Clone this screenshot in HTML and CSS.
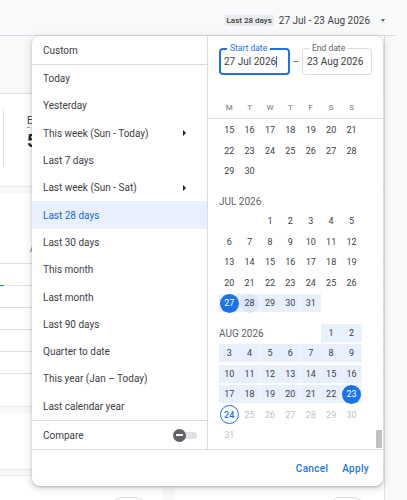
FILE: index.html
```html
<!DOCTYPE html>
<html lang="en">
<head>
  <meta charset="UTF-8">
  <meta name="viewport" content="width=device-width, initial-scale=1.0">
  <title>Reports snapshot</title>
  <link rel="stylesheet" href="styles.css">
</head>
<body>
<div class="page">
  <!-- top bar with the date range button -->
  <header class="topbar">
    <div class="range-btn">
      <span class="range-tag">Last 28 days</span>
      <span class="range-text">27 Jul - 23 Aug 2026</span>
      <span class="caret"></span>
    </div>
  </header>

  <!-- report cards behind the picker -->
  <main class="report">
    <div class="strip"></div>
    <section class="card kpis">
      <div class="kpi">
        <div class="kpi-label">Event count</div>
        <div class="kpi-value">5,204</div>
      </div>
    </section>
    <section class="card table-card">
      <div class="table-head">Active users</div>
      <div class="row"><span class="tab"></span></div>
      <div class="row"></div>
      <div class="row"></div>
      <div class="row"></div>
      <div class="row"></div>
    </section>
    <section class="card filler"></section>
    <div class="bottom-cards">
      <section class="card half left"><span class="chip"></span></section>
      <section class="card half right"><span class="chip"></span></section>
    </div>
  </main>

  <!-- date range picker -->
  <div class="picker">
    <div class="picker-body">
      <div class="presets">
        <div class="preset custom">Custom</div>
        <div class="preset">Today</div>
        <div class="preset">Yesterday</div>
        <div class="preset">This week (Sun - Today)<span class="sub"></span></div>
        <div class="preset">Last 7 days</div>
        <div class="preset">Last week (Sun - Sat)<span class="sub"></span></div>
        <div class="preset active">Last 28 days</div>
        <div class="preset">Last 30 days</div>
        <div class="preset">This month</div>
        <div class="preset">Last month</div>
        <div class="preset">Last 90 days</div>
        <div class="preset">Quarter to date</div>
        <div class="preset">This year (Jan – Today)</div>
        <div class="preset">Last calendar year</div>
        <div class="preset compare">Compare
          <span class="switch"><span class="track"></span><span class="thumb"></span></span>
        </div>
      </div>

      <div class="calendar">
        <div class="fields">
          <div class="field focus">
            <span class="field-label">Start date</span>
            27 Jul 2026<span class="cursor"></span>
          </div>
          <span class="dash">–</span>
          <div class="field">
            <span class="field-label">End date</span>
            23 Aug 2026
          </div>
        </div>
        <div class="weekdays">
          <span>M</span><span>T</span><span>W</span><span>T</span><span>F</span><span>S</span><span>S</span>
        </div>
        <div class="months">
          <div class="month">
            <div class="d">15</div><div class="d">16</div><div class="d">17</div><div class="d">18</div><div class="d">19</div><div class="d">20</div><div class="d">21</div>
            <div class="d">22</div><div class="d">23</div><div class="d">24</div><div class="d">25</div><div class="d">26</div><div class="d">27</div><div class="d">28</div>
            <div class="d">29</div><div class="d">30</div>
          </div>
          <div class="month">
            <div class="month-label full">JUL 2026</div>
            <div class="d wed">1</div><div class="d">2</div><div class="d">3</div><div class="d">4</div><div class="d">5</div>
            <div class="d">6</div><div class="d">7</div><div class="d">8</div><div class="d">9</div><div class="d">10</div><div class="d">11</div><div class="d">12</div>
            <div class="d">13</div><div class="d">14</div><div class="d">15</div><div class="d">16</div><div class="d">17</div><div class="d">18</div><div class="d">19</div>
            <div class="d">20</div><div class="d">21</div><div class="d">22</div><div class="d">23</div><div class="d">24</div><div class="d">25</div><div class="d">26</div>
            <div class="d in"><b class="sel">27</b></div><div class="d in"><b class="hover">28</b></div><div class="d in">29</div><div class="d in">30</div><div class="d in">31</div>
          </div>
          <div class="month">
            <div class="month-label">AUG 2026</div>
            <div class="d in">1</div><div class="d in">2</div>
            <div class="d in">3</div><div class="d in">4</div><div class="d in">5</div><div class="d in">6</div><div class="d in">7</div><div class="d in">8</div><div class="d in">9</div>
            <div class="d in">10</div><div class="d in">11</div><div class="d in">12</div><div class="d in">13</div><div class="d in">14</div><div class="d in">15</div><div class="d in">16</div>
            <div class="d in">17</div><div class="d in">18</div><div class="d in">19</div><div class="d in">20</div><div class="d in">21</div><div class="d in">22</div><div class="d in"><b class="sel">23</b></div>
            <div class="d"><b class="today">24</b></div><div class="d off">25</div><div class="d off">26</div><div class="d off">27</div><div class="d off">28</div><div class="d off">29</div><div class="d off">30</div>
            <div class="d off">31</div>
          </div>
          <span class="thumb-bar"></span>
        </div>
      </div>
    </div>
    <div class="picker-foot">
      <span class="btn">Cancel</span>
      <span class="btn">Apply</span>
    </div>
  </div>
</div>
</body>
</html>
```

FILE: styles.css
```css
/* page */
body{
  margin: 0;
  background-color: #f8f9fa;
  font-family: Roboto, "Noto Sans", sans-serif;
  color: #3c4043;
}
.page{
  position: relative;
  width: 407px;
  height: 500px;
  overflow: hidden;
}

/* top bar */
.topbar{
  width: 396px;
  height: 35px;
  border-bottom: 1px solid #dadce0;
  display: flex;
  justify-content: flex-end;
  align-items: center;
}
.range-btn{
  display: flex;
  align-items: center;
  margin-top: 6px;
  padding-right: 11px;
}
.range-tag{
  height: 11px;
  line-height: 11px;
  padding: 0 2px;
  background-color: #e8eaed;
  font-size: 8px;
  font-weight: 500;
  color: #3c4043;
}
.range-text{
  margin-left: 5px;
  font-size: 10px;
  color: #3c4043;
}
.caret{
  margin-left: 11px;
  border-top: 3px solid #5f6368;
  border-left: 2.5px solid transparent;
  border-right: 2.5px solid transparent;
}

/* cards behind */
.report{
  width: 384px;
  border-right: 1px solid #e0e0e0;
  height: 464px;
}
.strip{
  height: 57px;
  border-bottom: 1px solid #e0e0e0;
}
.card{
  background-color: #fff;
  border-bottom: 1px solid #e8eaed;
}
.kpis{
  height: 92px;
  display: flex;
}
.kpi{
  margin: 15px 0 20px 3px;
  padding-left: 23px;
  border-left: 1px solid #e0e0e0;
}
.kpi-label{
  font-size: 10px;
  line-height: 12px;
  white-space: nowrap;
  border-bottom: 1px dashed #9aa0a6;
  display: inline-block;
}
.kpi-value{
  margin-top: 2px;
  font-size: 18px;
  font-weight: 700;
  white-space: nowrap;
  color: #202124;
}
.table-card{
  margin-top: 6px;
  height: 214px;
  padding-top: 50px;
  box-sizing: border-box;
}
.table-head{
  height: 20px;
  line-height: 12px;
  padding-left: 30px;
  font-size: 9px;
  color: #5f6368;
  border-bottom: 1px solid #e0e0e0;
}
.row{
  position: relative;
  height: 21px;
  border-bottom: 1px solid #e0e0e0;
}
.tab{
  position: absolute;
  left: 0;
  bottom: -1px;
  width: 4px;
  border-bottom: 1px solid #1a73e8;
}
.filler{
  margin-top: 6px;
  height: 56px;
}
.bottom-cards{
  display: flex;
  gap: 12px;
  margin-top: 5px;
}
.half{
  height: 40px;
  border-top: 1px solid #e8eaed;
}
.half.left{
  width: 163px;
  padding-left: 112px;
  box-sizing: border-box;
}
.half.right{
  flex: 1;
  padding-left: 155px;
}
.chip{
  display: block;
  margin-top: 21px;
  width: 32px;
  height: 20px;
  border: 1px solid #dadce0;
  border-radius: 10px;
}

/* picker */
.picker{
  position: absolute;
  left: 32px;
  top: 36px;
  width: 351px;
  height: 450px;
  background-color: #fff;
  border-radius: 8px;
  box-shadow: 0 1px 2px rgba(60, 64, 67, 0.3), 0 2px 6px 2px rgba(60, 64, 67, 0.15);
  display: flex;
  flex-direction: column;
  overflow: hidden;
}
.picker-body{
  display: flex;
  height: 413px;
  border-bottom: 1px solid #dadce0;
}
.presets{
  width: 175px;
  border-right: 1px solid #dadce0;
  display: flex;
  flex-direction: column;
}
.preset{
  height: 27.3px;
  padding: 0 10px 0 11px;
  display: flex;
  align-items: center;
  justify-content: space-between;
  font-size: 10px;
  color: #3c4043;
  flex-shrink: 0;
}
.preset.custom{
  height: 28px;
  border-bottom: 1px solid #dadce0;
}
.preset.active{
  background-color: #e8f0fe;
  color: #1967d2;
}
.preset.compare{
  height: 28px;
  margin-top: auto;
  border-top: 1px solid #dadce0;
}
.sub{
  margin-right: 11px;
  border-left: 3px solid #202124;
  border-top: 3px solid transparent;
  border-bottom: 3px solid transparent;
}
.switch{
  position: relative;
  width: 24px;
  height: 13px;
}
.track{
  position: absolute;
  right: 0;
  top: 3px;
  width: 17px;
  height: 7px;
  border-radius: 4px;
  background-color: #e0e0e0;
}
.thumb{
  position: absolute;
  left: 0;
  top: 0;
  width: 13px;
  height: 13px;
  border-radius: 50%;
  background-color: #5f6368;
}
.thumb::after{
  content: "";
  position: absolute;
  left: 3px;
  top: 5.5px;
  width: 7px;
  height: 2px;
  background-color: #fff;
}

/* calendar side */
.calendar{
  flex: 1;
  display: flex;
  flex-direction: column;
  min-width: 0;
}
.fields{
  display: flex;
  align-items: center;
  padding: 12px 11px 0;
}
.field{
  position: relative;
  height: 27px;
  width: 70px;
  box-sizing: border-box;
  border: 1px solid #dadce0;
  border-radius: 4px;
  padding: 0 4px;
  display: flex;
  align-items: center;
  font-size: 10px;
  color: #3c4043;
  white-space: nowrap;
}
.field.focus{
  width: 71px;
  border: 2px solid #1a73e8;
  padding: 0 3px;
}
.field-label{
  position: absolute;
  left: 6px;
  top: -6px;
  padding: 0 3px;
  background-color: #fff;
  font-size: 8.5px;
  line-height: 10px;
  color: #5f6368;
}
.focus .field-label{
  top: -7px;
  color: #1a73e8;
}
.cursor{
  width: 1px;
  height: 11px;
  background-color: #1a73e8;
}
.dash{
  width: 12px;
  text-align: center;
  font-size: 10px;
  color: #5f6368;
}
.weekdays{
  display: grid;
  grid-template-columns: repeat(7, 20.4px);
  align-items: center;
  justify-items: center;
  height: 21px;
  margin-top: 22px;
  padding: 0 11px;
  border-bottom: 1px solid #dadce0;
  font-size: 8px;
  color: #70757a;
}
.months{
  position: relative;
  flex: 1;
  overflow: hidden;
  padding: 1px 11px 0;
}
.month{
  display: grid;
  grid-template-columns: repeat(7, 20.4px);
  grid-auto-rows: 20.4px;
}
.month + .month{
  margin-top: 9.7px;
}
.month-label{
  grid-column: span 5;
  display: flex;
  align-items: center;
  font-size: 10px;
  color: #5f6368;
}
.month-label.full{
  grid-column: 1 / -1;
}
.d{
  display: flex;
  align-items: center;
  justify-content: center;
  font-size: 9px;
  color: #3c4043;
}
.d.wed{
  grid-column-start: 3;
}
.d.in{
  background: linear-gradient(#e8f0fe, #e8f0fe) center / 100% 18px no-repeat;
}
.d.off{
  color: #bdc1c6;
}
.d b{
  width: 19px;
  height: 19px;
  box-sizing: border-box;
  border-radius: 50%;
  display: flex;
  align-items: center;
  justify-content: center;
  font-weight: 400;
}
.d b.sel{
  background-color: #1a73e8;
  color: #fff;
}
.d b.hover{
  background-color: #dde7fb;
}
.d b.today{
  border: 1px solid #1a73e8;
  color: #1a73e8;
  font-weight: 500;
}
.thumb-bar{
  position: absolute;
  right: 1px;
  bottom: 1px;
  width: 6px;
  height: 18px;
  background-color: #c1c1c1;
}

/* footer buttons */
.picker-foot{
  flex: 1;
  display: flex;
  justify-content: flex-end;
  align-items: center;
  gap: 14px;
  padding-right: 14px;
}
.btn{
  font-size: 10px;
  font-weight: 500;
  letter-spacing: 0.3px;
  color: #1a73e8;
}
```
